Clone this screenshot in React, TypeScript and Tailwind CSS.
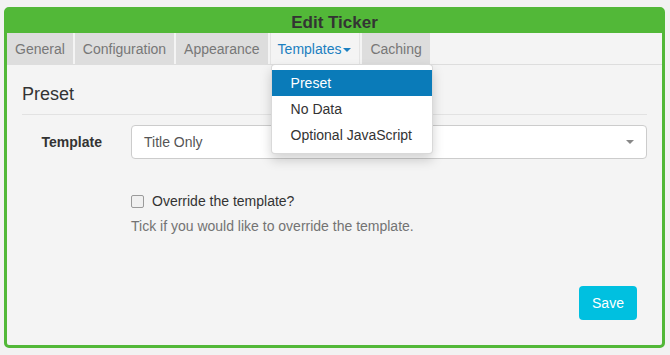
import React from "react";

const tabs = ["General", "Configuration", "Appearance", "Templates", "Caching"];

export default function App() {
  return (
    <div
      className="w-[670px] h-[355px] bg-[#f2f2f2] pt-[7px] pl-[4px]"
      style={{ fontFamily: '"Liberation Sans", Arial, Helvetica, sans-serif' }}
    >
      <div className="w-[661px] h-[341px] border-[3px] border-[#52b838] rounded-[5px] bg-[#f4f4f4] flex flex-col">
        <div className="h-[23px] bg-[#52b838] flex items-center justify-center text-[17px] font-bold text-[#333] leading-none pt-[1px]">
          Edit Ticker
        </div>
        <ul className="flex h-[32px] border-b border-[#ddd] gap-[2px]">
          {tabs.map((t) =>
            t === "Templates" ? (
              <li
                key={t}
                className="relative h-[31px] flex items-center pt-[1px] pl-[7px] pr-[8px] bg-[#f4f4f4] border-x border-[#e4e4e4] text-[14px] text-[#1b7fc0]"
              >
                <span>{t}</span>
                <span className="ml-[2px] mt-[1px] w-0 h-0 border-l-[4px] border-r-[4px] border-t-[4px] border-l-transparent border-r-transparent border-t-[#1b7fc0]" />
                <div className="absolute left-0 top-full z-10 w-[162px] py-[5px] bg-white border border-[rgba(0,0,0,0.15)] rounded-[4px] shadow-[0_6px_12px_rgba(0,0,0,0.175)] text-[14px] text-[#333] whitespace-nowrap">
                  <div className="h-[26px] leading-[26px] px-[19px] bg-[#0a7bb9] text-white">Preset</div>
                  <div className="h-[26px] leading-[26px] px-[19px]">No Data</div>
                  <div className="h-[26px] leading-[26px] px-[19px]">Optional JavaScript</div>
                </div>
              </li>
            ) : (
              <li
                key={t}
                className="h-[31px] flex items-center pt-[1px] px-[8px] bg-[#dddddd] text-[14px] text-[#777]"
              >
                {t}
              </li>
            )
          )}
        </ul>
        <div className="px-[15px] flex flex-col">
          <h3 className="mt-[19px] h-[20px] leading-[20px] text-[18px] text-[#333] box-content pb-[10px] border-b border-[#e2e2e2]">
            Preset
          </h3>
          <div className="mt-[10px] flex items-center h-[34px]">
            <label className="w-[80px] text-right font-bold text-[14px] text-[#333]">Template</label>
            <div className="ml-[29px] flex-1 h-[34px] bg-white border border-[#ccc] rounded-[4px] flex items-center justify-between pl-[12px] pr-[12px] text-[14px] text-[#555]">
              <span>Title Only</span>
              <span className="w-0 h-0 border-l-[4px] border-r-[4px] border-t-[4px] border-l-transparent border-r-transparent border-t-[#888]" />
            </div>
          </div>
          <div className="mt-[32px] ml-[109px] flex items-center h-[20px] text-[14px] text-[#333]">
            <span className="w-[13px] h-[13px] rounded-[2px] border border-[#9a9a9a] bg-[#f0f0f0]" />
            <span className="ml-[8px]">Override the template?</span>
          </div>
          <div className="mt-[5px] ml-[109px] h-[20px] leading-[20px] text-[14px] text-[#737373]">
            Tick if you would like to override the template.
          </div>
          <div className="mt-[50px] flex justify-end pr-[10px]">
            <button className="h-[34px] w-[58px] rounded-[4px] bg-[#00c0e0] text-white text-[14px]">
              Save
            </button>
          </div>
        </div>
      </div>
    </div>
  );
}
